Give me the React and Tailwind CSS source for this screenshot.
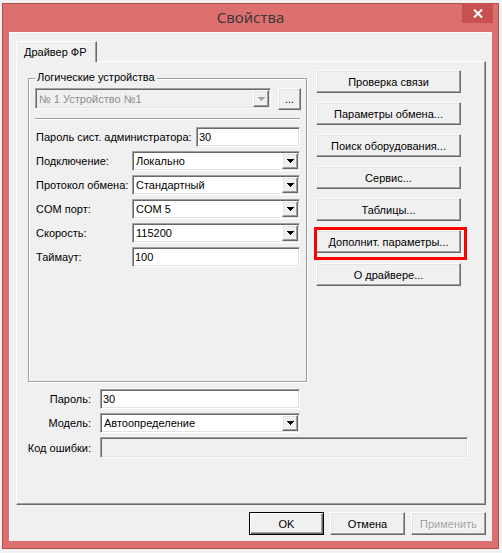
import React from "react";

const raised =
  "border border-t-white border-l-white border-r-[#696969] border-b-[#696969] shadow-[inset_-1px_-1px_0_#a0a0a0,inset_1px_1px_0_#e3e3e3]";
const sunken =
  "border border-t-[#a0a0a0] border-l-[#a0a0a0] border-r-white border-b-white shadow-[inset_1px_1px_0_#696969,inset_-1px_-1px_0_#e3e3e3]";

function Arrow({ color = "#000" }) {
  return (
    <svg width="7" height="4" shapeRendering="crispEdges">
      <rect x="0" y="0" width="7" height="1" fill={color} />
      <rect x="1" y="1" width="5" height="1" fill={color} />
      <rect x="2" y="2" width="3" height="1" fill={color} />
      <rect x="3" y="3" width="1" height="1" fill={color} />
    </svg>
  );
}

function Btn({ children, className = "" }) {
  return (
    <div
      className={`flex items-center justify-center bg-[#f0f0f0] leading-[14px] whitespace-nowrap ${raised} ${className}`}
    >
      {children}
    </div>
  );
}

function Combo({ value, className = "", disabled = false }) {
  return (
    <div
      className={`flex p-[1px] ${sunken} ${
        disabled ? "bg-[#f0f0f0] text-[#8d8d8d]" : "bg-white text-black"
      } ${className}`}
    >
      <div className="flex-1 pl-[2px] flex items-center leading-[14px] whitespace-nowrap overflow-hidden">
        {value}
      </div>
      <div
        className={`w-[16px] h-full flex items-center justify-center bg-[#f0f0f0] ${raised}`}
      >
        <Arrow color={disabled ? "#a0a0a0" : "#000"} />
      </div>
    </div>
  );
}

function Input({ value = "", className = "", disabled = false }) {
  return (
    <div
      className={`flex items-center pl-[2px] p-[1px] leading-[14px] ${sunken} ${
        disabled ? "bg-[#f0f0f0]" : "bg-white"
      } ${className}`}
    >
      {value}
    </div>
  );
}

function BottomLabel({ children }) {
  return (
    <span className="w-[72px] shrink-0 pr-[9px] flex justify-end whitespace-nowrap leading-[14px]">
      {children}
    </span>
  );
}

export default function App() {
  return (
    <div className="w-[502px] h-[553px] overflow-hidden bg-[#f2f2f2] pt-[3px] pl-[2px] font-['Liberation_Sans',Arial,sans-serif] text-[11px] text-black">
      <div className="w-[497px] h-[546px] border border-[#b14f4f] bg-[#de6f6f] flex flex-col">
        {/* Title bar */}
        <div className="relative h-[28px] flex justify-center pt-[3px]">
          <span className="font-['Noto_Sans',sans-serif] text-[15px] leading-[20px] text-[#3a3a3a]">
            Свойства
          </span>
          <div className="absolute right-[5px] top-[-1px] w-[31px] h-[20px] bg-[#c75050] flex items-center justify-center">
            <svg width="10" height="9" viewBox="0 0 10 9">
              <path d="M1 0.5 L9 8.5 M9 0.5 L1 8.5" stroke="#fff" strokeWidth="2" />
            </svg>
          </div>
        </div>

        {/* Client */}
        <div className="mx-[6px] h-[509px] bg-[#f0f0f0] border-t border-l border-[#fbfbfb] pt-[8px] pl-[6px] flex flex-col">
          {/* Tab */}
          <div className="relative z-10 w-[81px] h-[21px] -mb-[1px] bg-[#f0f0f0] border-t border-l border-white border-r border-r-[#696969] shadow-[inset_-1px_0_0_#a0a0a0] pl-[7px] pb-[1px] flex items-center leading-[14px]">
            Драйвер ФР
          </div>

          {/* Panel */}
          <div className="w-[470px] h-[444px] border border-t-white border-l-white border-r-[#696969] border-b-[#696969] shadow-[inset_-1px_-1px_0_#a0a0a0] pl-[11px] pt-[8px] flex flex-col">
            <div className="flex items-start">
              {/* Group box */}
              <div className="pt-[8px]">
                <div className="relative w-[279px] h-[304px] border border-[#a0a0a0] shadow-[inset_1px_1px_0_#fff,1px_1px_0_#fff] pl-[6px] pt-[9px] flex flex-col">
                  <span className="absolute left-[6px] top-[-9px] px-[2px] bg-[#f0f0f0] leading-[14px]">
                    Логические устройства
                  </span>
                  <div className="flex items-start">
                    <Combo value="№ 1 Устройство №1" disabled className="w-[236px] h-[21px]" />
                    <Btn className="ml-[7px] w-[23px] h-[22px]">...</Btn>
                  </div>
                  <div className="mt-[8px] w-[265px] h-[2px] border-t border-t-[#a0a0a0] border-b border-b-white" />
                  <div className="mt-[7px] flex flex-col gap-[4px]">
                    <div className="flex items-center h-[20px]">
                      <span className="w-[161px] pl-[1px] leading-[14px] whitespace-nowrap">Пароль сист. администратора:</span>
                      <Input value="30" className="w-[104px] h-[20px]" />
                    </div>
                    <div className="flex items-center h-[20px]">
                      <span className="w-[97px] pl-[1px] leading-[14px]">Подключение:</span>
                      <Combo value="Локально" className="w-[168px] h-[20px]" />
                    </div>
                    <div className="flex items-center h-[20px]">
                      <span className="w-[97px] pl-[1px] leading-[14px]">Протокол обмена:</span>
                      <Combo value="Стандартный" className="w-[168px] h-[20px]" />
                    </div>
                    <div className="flex items-center h-[20px]">
                      <span className="w-[97px] pl-[1px] leading-[14px]">COM порт:</span>
                      <Combo value="COM 5" className="w-[168px] h-[20px]" />
                    </div>
                    <div className="flex items-center h-[20px]">
                      <span className="w-[97px] pl-[1px] leading-[14px]">Скорость:</span>
                      <Combo value="115200" className="w-[168px] h-[20px]" />
                    </div>
                    <div className="flex items-center h-[20px]">
                      <span className="w-[97px] pl-[1px] leading-[14px]">Таймаут:</span>
                      <Input value="100" className="w-[168px] h-[20px]" />
                    </div>
                  </div>
                </div>
              </div>

              {/* Right buttons */}
              <div className="ml-[9px] flex flex-col gap-[9px]">
                <Btn className="w-[145px] h-[23px]">Проверка связи</Btn>
                <Btn className="w-[145px] h-[23px]">Параметры обмена...</Btn>
                <Btn className="w-[145px] h-[23px]">Поиск оборудования...</Btn>
                <Btn className="w-[145px] h-[23px]">Сервис...</Btn>
                <Btn className="w-[145px] h-[23px]">Таблицы...</Btn>
                <div className="relative">
                  <Btn className="w-[145px] h-[23px]">Дополнит. параметры...</Btn>
                  <div className="pointer-events-none absolute left-[-2px] top-[-3px] w-[153px] h-[33px] border-[3px] border-[#ff0000]" />
                </div>
                <Btn className="w-[145px] h-[23px] mt-[1px]">О драйвере...</Btn>
              </div>
            </div>

            {/* Bottom fields */}
            <div className="mt-[7px] flex flex-col gap-[4px]">
              <div className="flex items-center h-[20px]">
                <BottomLabel>Пароль:</BottomLabel>
                <Input value="30" className="w-[200px] h-[20px]" />
              </div>
              <div className="flex items-center h-[20px]">
                <BottomLabel>Модель:</BottomLabel>
                <Combo value="Автоопределение" className="w-[200px] h-[20px]" />
              </div>
              <div className="flex items-center h-[21px]">
                <BottomLabel>Код ошибки:</BottomLabel>
                <Input disabled className="w-[368px] h-[21px]" />
              </div>
            </div>
          </div>

          {/* Dialog buttons */}
          <div className="mt-[7px] pr-[6px] flex justify-end gap-[6px]">
            <div className="w-[75px] h-[23px] border border-black bg-[#f0f0f0] shadow-[inset_1px_1px_0_#fff,inset_-1px_-1px_0_#696969,inset_-2px_-2px_0_#a0a0a0] flex items-center justify-center leading-[14px]">
              OK
            </div>
            <Btn className="w-[75px] h-[23px]">Отмена</Btn>
            <Btn className="w-[75px] h-[23px] text-[#a0a0a0] [text-shadow:1px_1px_0_#fff]">Применить</Btn>
          </div>
        </div>
      </div>
    </div>
  );
}
